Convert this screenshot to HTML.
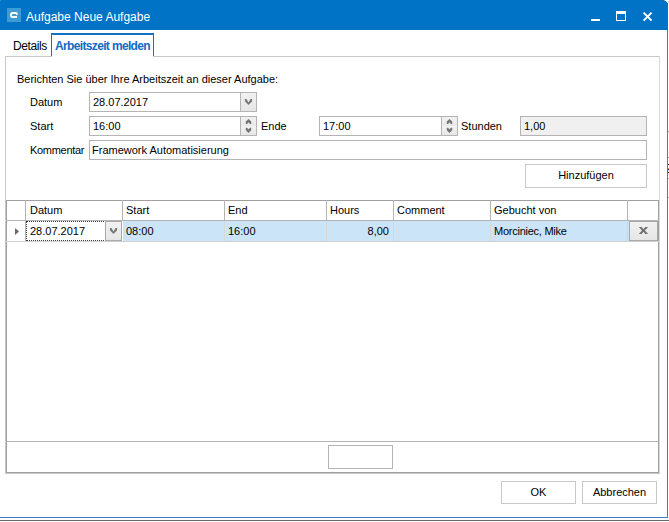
<!DOCTYPE html>
<html><head><meta charset="utf-8">
<style>
html,body{margin:0;padding:0;width:669px;height:522px;overflow:hidden;background:#fff;}
body{position:relative;font-family:"Liberation Sans",sans-serif;font-size:11px;color:#000;}
.a{position:absolute;}
.t{position:absolute;white-space:nowrap;line-height:13px;}
.box{position:absolute;box-sizing:border-box;border:1px solid #b4b4b4;background:#fff;}
.btn{position:absolute;box-sizing:border-box;border:1px solid #c8c8c8;background:#fff;text-align:center;}
.vl{position:absolute;width:1px;}
.hl{position:absolute;height:1px;}
</style></head><body>
<!-- title bar -->
<div class="a" style="left:0;top:0;width:668px;height:30px;background:#0173c7;"></div>
<div class="a" style="left:7px;top:8px;width:14px;height:14px;background:#3e9bd3;"></div>
<svg class="a" style="left:7px;top:8px" width="14" height="14" viewBox="0 0 14 14"><path d="M10.3 6.8 L9.3 5 H5 L4 6 V8 L5 9 H10" fill="none" stroke="#fff" stroke-width="1.9" stroke-linejoin="round"/></svg>
<div class="t" style="left:26px;top:10px;font-size:12px;line-height:15px;color:#fff;">Aufgabe Neue Aufgabe</div>
<div class="a" style="left:0;top:0;width:1px;height:1px;background:#5b87ab;"></div>
<div class="a" style="left:664px;top:0;width:1px;height:1px;background:#7b9cc0;"></div>
<div class="a" style="left:665px;top:0;width:4px;height:1px;background:#fff;"></div>
<div class="a" style="left:666px;top:1px;width:3px;height:1px;background:#d0dff0;"></div>
<div class="a" style="left:667px;top:2px;width:2px;height:1px;background:#e0eaf4;"></div>
<!-- window buttons -->
<div class="a" style="left:591px;top:19px;width:9px;height:2px;background:#fff;"></div>
<div class="a" style="left:616px;top:11px;width:10px;height:10px;box-sizing:border-box;border:1px solid #fff;border-top-width:3px;"></div>
<svg class="a" style="left:642px;top:11px" width="12" height="12" viewBox="0 0 12 12"><path d="M1.6 1.6 L9.6 9.6 M9.6 1.6 L1.6 9.6" stroke="#fff" stroke-width="2"/></svg>
<!-- window border -->
<div class="vl" style="left:667px;top:30px;height:488px;background:#3d7fc0;"></div>
<div class="hl" style="left:0;top:517px;width:668px;background:#3d7fc0;"></div>
<div class="hl" style="left:0;top:520px;width:669px;background:#6a6a6a;"></div>

<div class="a" style="left:668px;top:131px;width:1px;height:1px;background:#aaa;"></div>
<div class="a" style="left:668px;top:157px;width:1px;height:1px;background:#999;"></div>
<div class="a" style="left:668px;top:164px;width:1px;height:1px;background:#222;"></div>
<div class="a" style="left:668px;top:168px;width:1px;height:1px;background:#e0a050;"></div>
<div class="a" style="left:668px;top:169px;width:1px;height:1px;background:#102a80;"></div>
<div class="a" style="left:668px;top:170px;width:1px;height:1px;background:#a8e0ff;"></div>
<div class="a" style="left:668px;top:172px;width:1px;height:1px;background:#222;"></div>
<div class="a" style="left:668px;top:178px;width:1px;height:1px;background:#aaa;"></div>
<div class="a" style="left:668px;top:197px;width:1px;height:1px;background:#aaa;"></div>
<!-- tabs -->
<div class="t" style="left:13px;top:40px;font-size:12px;letter-spacing:-0.4px;">Details</div>
<div class="a" style="left:51px;top:33px;width:103px;height:24px;box-sizing:border-box;border:1px solid #1371c4;border-top-width:2px;border-bottom:none;background:#fff;"></div>
<div class="t" style="left:55px;top:40px;font-size:12px;font-weight:bold;letter-spacing:-0.65px;color:#0f6bc6;">Arbeitszeit melden</div>

<!-- panel border -->
<div class="hl" style="left:5px;top:56px;width:47px;background:#c8c8c8;"></div>
<div class="hl" style="left:153px;top:56px;width:507px;background:#c8c8c8;"></div>
<div class="vl" style="left:5px;top:56px;height:418px;background:#c8c8c8;"></div>
<div class="vl" style="left:659px;top:56px;height:418px;background:#d8d8d8;"></div>
<div class="hl" style="left:5px;top:473px;width:655px;background:#c8c8c8;"></div>

<div class="t" style="left:17px;top:73px;">Berichten Sie über Ihre Arbeitszeit an dieser Aufgabe:</div>
<div class="t" style="left:30px;top:96px;">Datum</div>
<div class="t" style="left:30px;top:120px;">Start</div>
<div class="t" style="left:30px;top:144px;letter-spacing:-0.3px;">Kommentar</div>

<!-- datum dropdown -->
<div class="box" style="left:89px;top:92px;width:168px;height:20px;"></div>
<div class="t" style="left:93px;top:96px;">28.07.2017</div>
<div class="a" style="left:240px;top:92px;width:17px;height:20px;box-sizing:border-box;border:1px solid #b4b4b4;background:linear-gradient(#f1f1f1,#e6e6e6);"></div>
<svg class="a" style="left:240px;top:92px" width="17" height="20" viewBox="0 0 17 20"><path d="M4.9 7 H6.4 L8.5 10.5 L10.6 7 H12.1 V9.3 L8.5 13 L4.9 9.3 Z" fill="#767676"/></svg>

<!-- start spin -->
<div class="box" style="left:89px;top:116px;width:168px;height:20px;"></div>
<div class="t" style="left:93px;top:120px;">16:00</div>
<div class="a" style="left:240px;top:116px;width:17px;height:20px;box-sizing:border-box;border:1px solid #b4b4b4;background:linear-gradient(#f1f1f1 0,#e9e9e9 9px,#f3f3f3 9px,#e6e6e6 18px);"></div>
<svg class="a" style="left:240px;top:116px" width="17" height="20" viewBox="0 0 17 20"><path d="M5.8 8 V5.6 L8.5 2.9 L11.2 5.6 V8 H9.9 L8.5 6.3 L7.1 8 Z M5.8 11.8 H7.1 L8.5 13.5 L9.9 11.8 H11.2 V14.2 L8.5 16.9 L5.8 14.2 Z" fill="#747474"/></svg>

<div class="t" style="left:261px;top:120px;">Ende</div>
<div class="box" style="left:319px;top:116px;width:139px;height:20px;"></div>
<div class="t" style="left:323px;top:120px;">17:00</div>
<div class="a" style="left:441px;top:116px;width:17px;height:20px;box-sizing:border-box;border:1px solid #b4b4b4;background:linear-gradient(#f1f1f1 0,#e9e9e9 9px,#f3f3f3 9px,#e6e6e6 18px);"></div>
<svg class="a" style="left:441px;top:116px" width="17" height="20" viewBox="0 0 17 20"><path d="M5.8 8 V5.6 L8.5 2.9 L11.2 5.6 V8 H9.9 L8.5 6.3 L7.1 8 Z M5.8 11.8 H7.1 L8.5 13.5 L9.9 11.8 H11.2 V14.2 L8.5 16.9 L5.8 14.2 Z" fill="#747474"/></svg>

<div class="t" style="left:461px;top:120px;">Stunden</div>
<div class="box" style="left:520px;top:116px;width:127px;height:20px;background:#f0f0f0;"></div>
<div class="t" style="left:524px;top:120px;">1,00</div>

<div class="box" style="left:89px;top:140px;width:558px;height:20px;"></div>
<div class="t" style="left:92px;top:144px;">Framework Automatisierung</div>

<div class="btn" style="left:525px;top:164px;width:122px;height:24px;"></div>
<div class="t" style="left:525px;top:169px;width:122px;text-align:center;">Hinzufügen</div>

<!-- grid -->
<div class="a" style="left:6px;top:200px;width:653px;height:273px;box-sizing:border-box;border:1px solid #a0a0a0;"></div>
<div class="hl" style="left:6px;top:220px;width:653px;background:#b4b4b4;"></div>
<div class="hl" style="left:6px;top:441px;width:653px;background:#b4b4b4;"></div>

<!-- header separators -->
<div class="vl" style="left:25px;top:200px;height:21px;background:#b4b4b4;"></div>
<div class="vl" style="left:122px;top:200px;height:21px;background:#b4b4b4;"></div>
<div class="vl" style="left:224px;top:200px;height:21px;background:#b4b4b4;"></div>
<div class="vl" style="left:326px;top:200px;height:21px;background:#b4b4b4;"></div>
<div class="vl" style="left:393px;top:200px;height:21px;background:#b4b4b4;"></div>
<div class="vl" style="left:490px;top:200px;height:21px;background:#b4b4b4;"></div>
<div class="vl" style="left:627px;top:200px;height:21px;background:#b4b4b4;"></div>
<div class="t" style="left:30px;top:204px;">Datum</div>
<div class="t" style="left:126px;top:204px;">Start</div>
<div class="t" style="left:228px;top:204px;">End</div>
<div class="t" style="left:330px;top:204px;">Hours</div>
<div class="t" style="left:397px;top:204px;">Comment</div>
<div class="t" style="left:494px;top:204px;">Gebucht von</div>
<!-- row -->
<div class="vl" style="left:25px;top:221px;height:20px;background:#b4b4b4;"></div>
<svg class="a" style="left:14px;top:227px" width="6" height="9" viewBox="0 0 6 9"><path d="M1 1 L5 4.5 L1 8 Z" fill="#6a6a6a"/></svg>
<div class="a" style="left:123px;top:221px;width:506px;height:20px;background:#cce4f7;"></div>
<div class="hl" style="left:6px;top:241px;width:653px;background:#d0d0d0;"></div>
<div class="vl" style="left:224px;top:221px;height:20px;background:#d8d8d8;"></div>
<div class="vl" style="left:326px;top:221px;height:20px;background:#d8d8d8;"></div>
<div class="vl" style="left:393px;top:221px;height:20px;background:#d8d8d8;"></div>
<div class="vl" style="left:490px;top:221px;height:20px;background:#d8d8d8;"></div>
<div class="vl" style="left:627px;top:221px;height:20px;background:#d4d4d4;"></div>
<div class="a" style="left:26px;top:221px;width:80px;height:20px;box-sizing:border-box;border:1px dotted #3a3a3a;"></div>
<div class="t" style="left:30px;top:225px;">28.07.2017</div>
<div class="a" style="left:105px;top:221px;width:17px;height:20px;box-sizing:border-box;border:1px solid #a8a8a8;background:linear-gradient(#f1f1f1,#e6e6e6);"></div>
<svg class="a" style="left:105px;top:221px" width="17" height="20" viewBox="0 0 17 20"><path d="M4.9 7 H6.4 L8.5 10.5 L10.6 7 H12.1 V9.3 L8.5 13 L4.9 9.3 Z" fill="#767676"/></svg>
<div class="t" style="left:126px;top:225px;">08:00</div>
<div class="t" style="left:228px;top:225px;">16:00</div>
<div class="t" style="left:330px;top:225px;width:59px;text-align:right;">8,00</div>
<div class="t" style="left:494px;top:225px;letter-spacing:-0.25px;">Morciniec, Mike</div>
<div class="a" style="left:629px;top:221px;width:29px;height:20px;box-sizing:border-box;border:1px solid #a8a8a8;background:linear-gradient(#f1f1f1,#e6e6e6);"></div>
<svg class="a" style="left:629px;top:221px" width="29" height="20" viewBox="0 0 29 20"><path d="M9.8 6 H12.6 L14.45 8.3 L16.3 6 H19.1 L15.9 9.55 L19.1 13.1 H16.3 L14.45 10.8 L12.6 13.1 H9.8 L13 9.55 Z" fill="#707070"/></svg>

<!-- footer box -->
<div class="a" style="left:328px;top:445px;width:65px;height:24px;box-sizing:border-box;border:1px solid #b4b4b4;"></div>

<!-- ok / cancel -->
<div class="btn" style="left:501px;top:481px;width:75px;height:23px;"></div>
<div class="t" style="left:501px;top:486px;width:75px;text-align:center;">OK</div>
<div class="btn" style="left:582px;top:481px;width:75px;height:23px;"></div>
<div class="t" style="left:582px;top:486px;width:75px;text-align:center;">Abbrechen</div>
</body></html>
